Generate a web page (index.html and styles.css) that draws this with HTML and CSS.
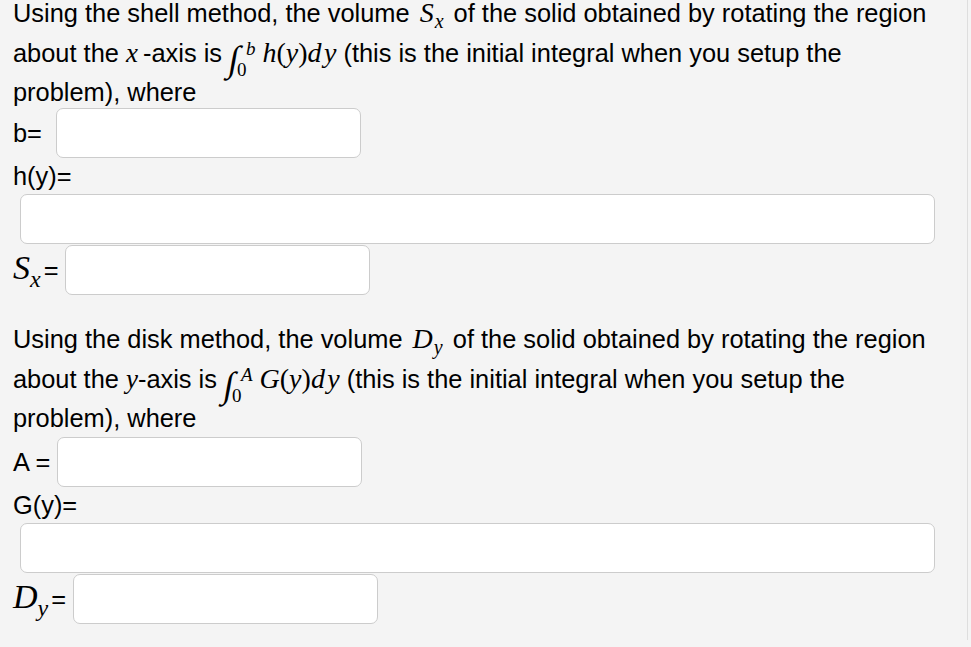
FILE: index.html
```html
<!DOCTYPE html>
<html>
<head>
<meta charset="utf-8">
<title>Volume problem</title>
<link rel="stylesheet" href="styles.css">
</head>
<body>
<div class="page">
  <section class="q q-first">
    <p class="text">Using the shell method, the volume <span class="m"><i class="big">S</i><sub class="sb">x</sub></span> of the solid obtained by rotating the region<br>about the <i class="mv">x</i>&thinsp;-axis is <span class="int"><span class="isign">∫</span><span class="lims"><span class="sup">b</span><span class="sub">0</span></span></span> <span class="m expr"><i>h</i>(<i>y</i>)<i>d</i>&#8202;<i>y</i></span> (this is the initial integral when you setup the<br>problem), where</p>
    <div class="row"><span class="lbl">b=&nbsp;</span><input class="box short" type="text"></div>
    <div class="lbl line">h(y)=</div>
    <input class="box wide" type="text">
    <div class="row row-tight"><span class="lbl"><span class="m lm"><i class="lbig">S</i><sub class="lsb">x</sub></span>=</span><input class="box short" type="text"></div>
  </section>
  <section class="q q-second">
    <p class="text">Using the disk method, the volume <span class="m"><i class="big dd">D</i><sub class="sb">y</sub></span> of the solid obtained by rotating the region<br>about the <i class="mv">y</i>-axis is <span class="int"><span class="isign">∫</span><span class="lims"><span class="sup">A</span><span class="sub">0</span></span></span> <span class="m expr"><i>G</i>(<i>y</i>)<i>d</i>&#8202;<i>y</i></span> (this is the initial integral when you setup the<br>problem), where</p>
    <div class="row row-a"><span class="lbl">A =</span><input class="box short" type="text"></div>
    <div class="lbl line">G(y)=</div>
    <input class="box wide" type="text">
    <div class="row row-tight"><span class="lbl"><span class="m lm"><i class="lbig dd">D</i><sub class="lsb">y</sub></span>=</span><input class="box short" type="text"></div>
  </section>
</div>
</body>
</html>
```
FILE: styles.css
```css
html, body {
  margin: 0;
  padding: 0;
}
body {
  background: #f4f4f4;
  font-family: "Liberation Sans", Arial, Helvetica, sans-serif;
  font-size: 25.4px;
  color: #000;
  overflow: hidden;
}
.page {
  width: 967px;
  min-height: 100vh;
  border-right: 1px solid #dedede;
}
.q {
  padding-left: 13px;
}
.q-first {
  margin-top: -7px;
}
.q-second {
  margin-top: 24px;
}
.text {
  margin: 0;
  line-height: 39px;
}
.m {
  font-family: "Liberation Serif", "Times New Roman", serif;
  font-style: italic;
  white-space: nowrap;
}
.m i {
  font-style: italic;
}
.big {
  font-size: 28px;
  margin-left: 3px;
}
.sb {
  font-size: 20px;
  vertical-align: -6px;
  line-height: 0;
  margin-left: 1px;
  margin-right: 3px;
}
.lm {
  margin-right: 3px;
}
.lbig {
  font-size: 34px;
  line-height: 0;
}
.lsb {
  font-size: 24px;
  vertical-align: -8px;
  line-height: 0;
}
.mv {
  font-family: "Liberation Serif", "Times New Roman", serif;
  font-size: 27px;
}
.expr {
  font-size: 28px;
  font-style: normal;
}
.int {
  display: inline-flex;
  align-items: center;
  vertical-align: -9px;
  line-height: 1;
  height: 36px;
  margin: -10px 0;
  font-family: "Liberation Serif", "Times New Roman", serif;
}
.isign {
  font-size: 36px;
  font-style: italic;
  display: inline-block;
  transform: skewX(-10deg);
}
.lims {
  display: inline-flex;
  flex-direction: column;
  justify-content: space-between;
  height: 38px;
  margin-left: -2px;
}
.lims .sup {
  font-size: 19px;
  font-style: italic;
  line-height: 17px;
  margin-left: 9px;
}
.lims .sub {
  font-size: 19px;
  line-height: 17px;
}
.row {
  display: flex;
  align-items: center;
  gap: 7px;
  margin-top: -4px;
}
.row-a {
  margin-top: -1px;
}
.row-tight {
  margin-top: 1px;
}
.lbl {
  white-space: nowrap;
}
.line {
  display: block;
  line-height: 28px;
  margin-top: 4px;
  margin-bottom: 4px;
}
.box {
  display: block;
  box-sizing: border-box;
  height: 50px;
  margin: 0;
  padding: 0 8px;
  background: #fff;
  border: 1px solid #cccccc;
  border-radius: 7px;
  font: inherit;
  outline: none;
}
.short {
  width: 305px;
}
.wide {
  width: 915px;
  margin-left: 7px;
}
```
